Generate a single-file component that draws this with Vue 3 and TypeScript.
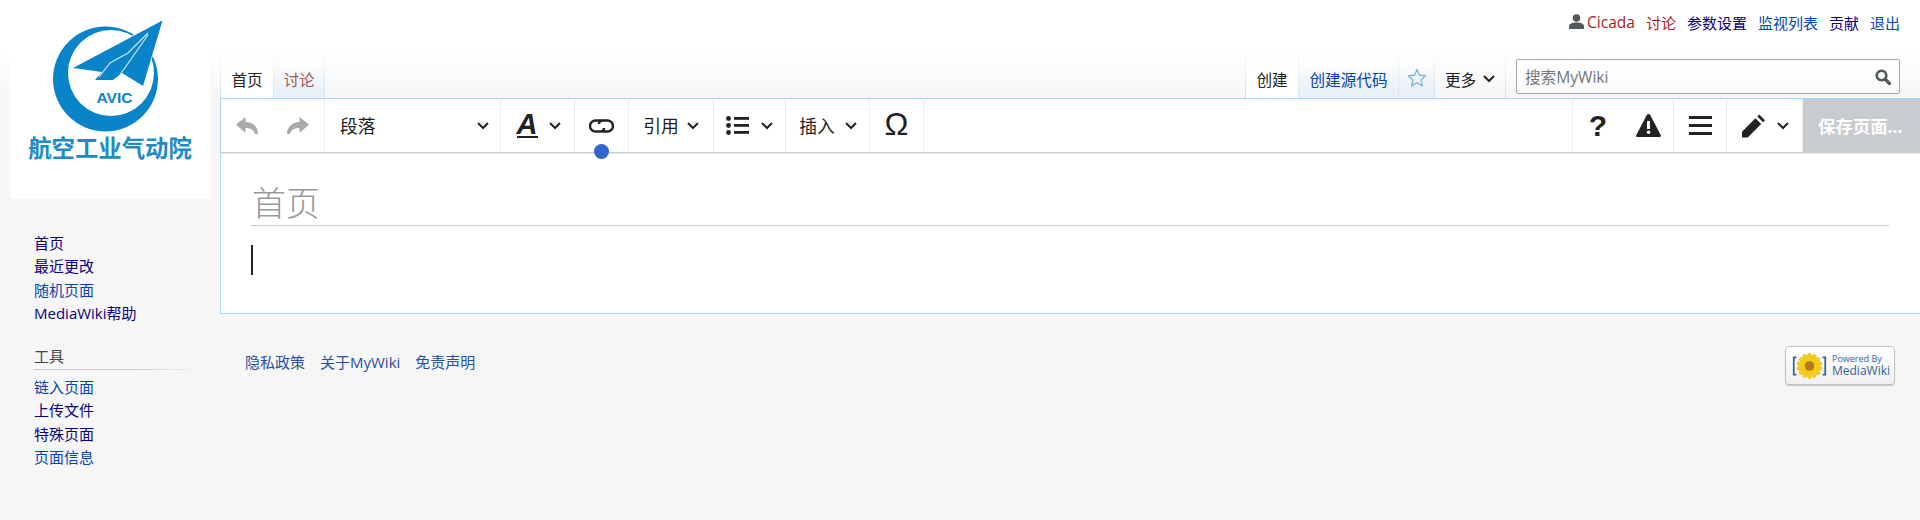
<script setup lang="ts">
interface NavLink {
  text: string
  visited?: boolean
}

const mainLinks: NavLink[] = [
  { text: '首页', visited: true },
  { text: '最近更改', visited: true },
  { text: '随机页面' },
  { text: 'MediaWiki帮助', visited: true },
]

const toolLinks: NavLink[] = [
  { text: '链入页面' },
  { text: '上传文件', visited: true },
  { text: '特殊页面', visited: true },
  { text: '页面信息' },
]

const petals = Array.from({ length: 14 }, (_, i) => i * (360 / 14))
</script>

<template>
  <div class="page">
    <aside class="sidebar">
      <div class="logo">
        <svg viewBox="10 0 200 199" width="200" height="199">
          <path
            fill="#0a84c8"
            fill-rule="evenodd"
            d="M53 79a52.500 52.500 0 1 0 105 0a52.500 52.500 0 1 0-105 0zM68 73a43 43 0 1 1 86 0a43 43 0 1 1-86 0z"
          />
          <path
            fill="#0a84c8"
            stroke="#fff"
            stroke-width="1.5"
            paint-order="stroke"
            d="M162.500 20.500L73 68l29 4-7 8h18l9-7 21 13z"
          />
          <path fill="none" stroke="#cfe6f3" stroke-width="1.2" d="M148 33l-20 20-18 10-11 14M148 35l-31 44" />
          <text x="114.500" y="103" class="logo-avic">AVIC</text>
          <text x="110" y="157" class="logo-name">航空工业气动院</text>
        </svg>
      </div>
      <nav class="nav">
        <a v-for="l in mainLinks" :key="l.text" :class="{ visited: l.visited }">{{ l.text }}</a>
        <h3 class="nav-title">工具</h3>
        <a v-for="l in toolLinks" :key="l.text" :class="{ visited: l.visited }">{{ l.text }}</a>
      </nav>
    </aside>

    <main class="main">
      <div class="personal">
        <svg class="user-icon" viewBox="0 0 15 15" width="15" height="15">
          <circle cx="7.500" cy="4" r="3.800" fill="#54595d" />
          <path d="M0 15v-2.500C0 9.500 3 8.500 7.500 8.500S15 9.500 15 12.500V15z" fill="#54595d" />
        </svg>
        <a class="user-name">Cicada</a>
        <a class="red">讨论</a>
        <a class="visited">参数设置</a>
        <a>监视列表</a>
        <a class="visited">贡献</a>
        <a>退出</a>
      </div>

      <div class="head">
        <div class="tabs">
          <span class="tab selected tab-main">首页</span>
          <span class="tab tab-talk">讨论</span>
        </div>
        <div class="head-right">
          <div class="tabs">
            <span class="tab selected tab-create">创建</span>
            <span class="tab tab-source">创建源代码</span>
            <span class="tab tab-star">
              <svg viewBox="0 0 20 19" width="20" height="19">
                <path
                  d="M10 1.500l2.500 5.700 6.100.6-4.600 4.100 1.400 6-5.400-3.200-5.400 3.200 1.400-6L1.400 7.800l6.100-.6z"
                  fill="none"
                  stroke="#7fb8d8"
                  stroke-width="1.400"
                  stroke-linejoin="round"
                />
              </svg>
            </span>
            <span class="tab tab-more">
              更多
              <svg class="chev" viewBox="0 0 12 8" width="12" height="8">
                <polyline points="1,1 6,6 11,1" />
              </svg>
            </span>
          </div>
          <div class="search">
            <span class="search-text">搜索MyWiki</span>
            <svg viewBox="0 0 16 16" width="16" height="16">
              <circle cx="6.500" cy="6.500" r="4.800" fill="none" stroke="#54595d" stroke-width="2.600" />
              <path d="M10 10L14.500 14.500" stroke="#54595d" stroke-width="3.200" stroke-linecap="round" />
            </svg>
          </div>
        </div>
      </div>

      <div class="content">
        <div class="toolbar">
          <div class="tool-group">
            <div class="tool tool-history">
              <svg viewBox="0 0 22 17" width="22" height="17">
                <path fill="#aaa" d="M0 7.500L9.500 0v5C17 5 22 10 22 17h-3c-1-4-4.500-6-9.500-6v5z" />
              </svg>
            </div>
            <div class="tool tool-history">
              <svg viewBox="0 0 22 17" width="22" height="17">
                <path fill="#aaa" d="M22 7.500L12.500 0v5C5 5 0 10 0 17h3c1-4 4.500-6 9.500-6v5z" />
              </svg>
            </div>
          </div>
          <div class="tool-group tool tool-format">
            <span class="tool-label">段落</span>
            <svg class="chev" viewBox="0 0 12 8" width="12" height="8"><polyline points="1,1 6,6 11,1" /></svg>
          </div>
          <div class="tool-group tool tool-style">
            <span class="glyph-a">A</span>
            <svg class="chev" viewBox="0 0 12 8" width="12" height="8"><polyline points="1,1 6,6 11,1" /></svg>
          </div>
          <div class="tool-group tool tool-link">
            <svg viewBox="0 0 25 14" width="25" height="14">
              <path
                fill="none"
                stroke="#222"
                stroke-width="2.400"
                d="M13 1.500H6.500a5.500 5.500 0 0 0 0 11H11c2.500 0 4-1.500 4-3.500M12 12.500h6.500a5.500 5.500 0 0 0 0-11H14c-2.500 0-4 1.500-4 3.500"
              />
            </svg>
            <span class="link-dot"></span>
          </div>
          <div class="tool-group tool tool-cite">
            <span class="tool-label">引用</span>
            <svg class="chev" viewBox="0 0 12 8" width="12" height="8"><polyline points="1,1 6,6 11,1" /></svg>
          </div>
          <div class="tool-group tool tool-list">
            <svg viewBox="0 0 23 19" width="23" height="19" fill="#222">
              <circle cx="2.500" cy="2.500" r="2.400" />
              <circle cx="2.500" cy="9.500" r="2.400" />
              <circle cx="2.500" cy="16.500" r="2.400" />
              <rect x="8" y="1" width="15" height="2.800" />
              <rect x="8" y="8" width="15" height="2.800" />
              <rect x="8" y="15" width="15" height="2.800" />
            </svg>
            <svg class="chev" viewBox="0 0 12 8" width="12" height="8"><polyline points="1,1 6,6 11,1" /></svg>
          </div>
          <div class="tool-group tool tool-insert">
            <span class="tool-label">插入</span>
            <svg class="chev" viewBox="0 0 12 8" width="12" height="8"><polyline points="1,1 6,6 11,1" /></svg>
          </div>
          <div class="tool-group tool tool-omega">
            <span class="glyph-omega">Ω</span>
          </div>

          <div class="toolbar-right">
            <div class="tool-group tool-start">
              <div class="tool tool-help"><span class="glyph-help">?</span></div>
              <div class="tool tool-notice">
                <svg viewBox="0 0 25 23" width="25" height="23">
                  <path fill="#222" d="M12.500 0c.8 0 1.300.4 1.700 1l10.500 20c.6 1.100-.1 2-1.300 2H1.600C.4 23-.3 22.100.3 21L10.800 1c.4-.6.900-1 1.700-1z" />
                  <rect x="11" y="7" width="3" height="8" fill="#fff" />
                  <circle cx="12.500" cy="18.300" r="1.800" fill="#fff" />
                </svg>
              </div>
            </div>
            <div class="tool-group tool tool-menu">
              <svg viewBox="0 0 23 19" width="23" height="19" fill="#222">
                <rect width="23" height="3" />
                <rect y="8" width="23" height="3" />
                <rect y="16" width="23" height="3" />
              </svg>
            </div>
            <div class="tool-group tool tool-edit">
              <svg viewBox="0 0 24 24" width="23" height="24" fill="#222">
                <path d="M0 24v-6L14 4l6 6L6 24z" />
                <path d="M16 2l2-2 6 6-2 2z" />
              </svg>
              <svg class="chev" viewBox="0 0 12 8" width="12" height="8"><polyline points="1,1 6,6 11,1" /></svg>
            </div>
            <div class="save">保存页面...</div>
          </div>
        </div>

        <div class="editor">
          <h1 class="title">首页</h1>
          <div class="cursor"></div>
        </div>
      </div>

      <footer class="footer">
        <div class="footer-links">
          <a>隐私政策</a>
          <a>关于MyWiki</a>
          <a>免责声明</a>
        </div>
        <div class="powered">
          <svg viewBox="0 0 40 30" width="40" height="30">
            <path d="M5 5H2v20h3M35 5h3v20h-3" fill="none" stroke="#33659a" stroke-width="2" />
            <ellipse
              v-for="r in petals"
              :key="r"
              cx="20"
              cy="5.500"
              rx="3"
              ry="5.500"
              fill="#f2cb1d"
              :transform="`rotate(${r} 20 15)`"
            />
            <circle cx="20" cy="15" r="5.500" fill="#b5781a" />
          </svg>
          <div class="powered-text">
            <span class="powered-by">Powered By</span>
            <span class="powered-name">MediaWiki</span>
          </div>
        </div>
      </footer>
    </main>
  </div>
</template>

<style>
html,
body {
  margin: 0;
  background: #f6f6f6;
}
</style>

<style scoped>
.page {
  display: grid;
  grid-template-columns: 220px 1fr;
  min-height: 520px;
  overflow: hidden;
  background: #f6f6f6 linear-gradient(#fff 50px, #f6f6f6 98px) no-repeat;
  background-size: 100% 98px;
  font-family: "Open Sans", "Noto Sans CJK SC", sans-serif;
  color: #222;
}

a {
  color: #0645ad;
  text-decoration: none;
}

a.visited {
  color: #0b0080;
}

.sidebar {
  display: flex;
  flex-direction: column;
}

.logo {
  margin-left: 10px;
  width: 200px;
  height: 199px;
  background: #fff;
}

.logo svg {
  display: block;
}

.logo-avic {
  font: bold 15.500px "Liberation Sans", sans-serif;
  fill: #0a84c8;
  text-anchor: middle;
}

.logo-name {
  font: bold 23.400px "Noto Sans CJK SC", sans-serif;
  fill: #1e8ac6;
  text-anchor: middle;
}

.nav {
  display: flex;
  flex-direction: column;
  align-items: flex-start;
  padding: 33px 0 0 34px;
  font-size: 15px;
  line-height: 23.400px;
}

.nav-title {
  width: 166px;
  margin: 19px 0 6px;
  padding-bottom: 2px;
  font-size: 15px;
  font-weight: 400;
  line-height: 23.400px;
  color: #444;
  background: linear-gradient(to right, #c8ccd1, #c8ccd1 60%, rgba(200, 204, 209, 0)) no-repeat bottom / 100% 1px;
}

.main {
  display: flex;
  flex-direction: column;
  min-width: 0;
}

.personal {
  display: flex;
  align-items: center;
  justify-content: flex-end;
  gap: 11px;
  height: 44px;
  margin-bottom: 6px;
  padding-right: 20px;
  font-size: 15px;
}

.user-icon {
  margin-right: -8px;
  margin-bottom: 2px;
}

.user-name,
.red {
  color: #a81c1c;
}

.user-name {
  font-size: 15.500px;
}

.head {
  display: flex;
  justify-content: space-between;
  height: 48px;
}

.head-right {
  display: flex;
  gap: 10px;
  padding-right: 20px;
}

.tabs {
  display: flex;
  border-left: 1px solid;
  border-image: linear-gradient(rgba(207, 227, 241, 0), #cfe3f1) 1;
}

.tab {
  display: flex;
  align-items: center;
  justify-content: center;
  box-sizing: border-box;
  height: 48px;
  padding: 12px 0 2px;
  border-right: 1px solid;
  border-image: linear-gradient(rgba(207, 227, 241, 0), #cfe3f1) 1;
  font-size: 15.600px;
  color: #0645ad;
  background: linear-gradient(rgba(255, 255, 255, 0) 30%, #e6f0f8);
}

.tab.selected {
  color: #222;
  background: linear-gradient(rgba(255, 255, 255, 0), #fff 50%);
}

.tab-main {
  width: 53px;
}

.tab-talk {
  width: 51px;
  color: #a55858;
}

.tab-create {
  width: 53px;
}

.tab-source {
  width: 100px;
}

.tab-star {
  width: 36px;
  padding: 0 0 8px;
  align-items: flex-end;
}

.tab-star svg {
  margin-bottom: 3px;
}

.tab-more {
  width: 71px;
  gap: 7px;
  color: #222;
  background: none;
}

.chev {
  flex-shrink: 0;
  fill: none;
  stroke: #222;
  stroke-width: 2;
}

.search {
  display: flex;
  align-items: center;
  justify-content: space-between;
  box-sizing: border-box;
  width: 384px;
  height: 35px;
  margin-top: 9px;
  padding: 0 8px;
  border: 1px solid #a2a9b1;
  border-radius: 2px;
  background: rgba(255, 255, 255, 0.5);
}

.search-text {
  font-size: 15.600px;
  color: #72777d;
}

.content {
  display: flex;
  flex-direction: column;
  height: 216px;
  box-sizing: border-box;
  border: 1px solid #a7d7f9;
  border-right: 0;
  background: #fff;
}

.toolbar {
  display: flex;
  flex-shrink: 0;
  box-sizing: border-box;
  height: 54px;
  border-bottom: 1px solid #c8ccd1;
  box-shadow: 0 1px 1px rgba(0, 0, 0, 0.08);
}

.toolbar-right {
  display: flex;
  margin-left: auto;
}

.tool-group {
  display: flex;
  box-sizing: border-box;
  border-right: 1px solid #eaecf0;
}

.tool {
  position: relative;
  display: flex;
  align-items: center;
  justify-content: center;
  gap: 10px;
  box-sizing: border-box;
}

.tool-label {
  margin-top: -2px;
  font-size: 17.800px;
  color: #222;
}

.tool-history {
  width: 51.500px;
}

.tool-format {
  width: 176px;
  justify-content: space-between;
  padding: 0 11px 0 15px;
}

.tool-style {
  width: 74px;
  gap: 11px;
  padding-left: 3px;
}

.tool-link {
  width: 54px;
}

.link-dot {
  position: absolute;
  left: 19px;
  bottom: -7px;
  width: 15px;
  height: 15px;
  border-radius: 50%;
  background: #36c;
}

.tool-cite {
  width: 85px;
  gap: 8px;
}

.tool-list {
  width: 72px;
  gap: 12px;
}

.tool-insert {
  width: 84px;
  gap: 10px;
  padding-left: 1px;
}

.tool-omega {
  width: 54px;
}

.glyph-a {
  font-family: "Liberation Sans", sans-serif;
  font-size: 29px;
  font-style: italic;
  font-weight: 700;
  line-height: 21px;
  border-bottom: 2.500px solid #222;
  padding: 0 1px 1px 0;
}

.glyph-omega {
  margin-top: -4px;
  font-family: "Liberation Sans", sans-serif;
  font-size: 32px;
  line-height: 1;
  color: #222;
}

.glyph-help {
  font-family: "Liberation Sans", sans-serif;
  font-size: 30px;
  font-weight: 700;
  line-height: 1;
}

.tool-start {
  width: 102px;
  border-left: 1px solid #eaecf0;
}

.tool-help {
  width: 50px;
}

.tool-notice {
  width: 50px;
}

.tool-menu {
  width: 53px;
}

.tool-edit {
  width: 76px;
  gap: 12px;
  padding-left: 2px;
}

.save {
  display: flex;
  align-items: center;
  box-sizing: border-box;
  width: 117px;
  padding-left: 15px;
  background: #c8ccd1;
  color: #fff;
  font-size: 17.400px;
  font-weight: 700;
  white-space: nowrap;
}

.editor {
  padding: 0 31px 0 30px;
}

.title {
  margin: 0;
  height: 73px;
  box-sizing: border-box;
  padding: 27px 0 0 1px;
  border-bottom: 1px solid #c8ccd1;
  font-size: 34px;
  font-weight: 300;
  line-height: 46px;
  color: #999;
}

.cursor {
  width: 2px;
  height: 30px;
  margin-top: 19px;
  background: #222;
}

.footer {
  display: flex;
  justify-content: space-between;
  align-items: flex-start;
  padding: 32px 25px 0;
}

.footer-links {
  display: flex;
  gap: 15px;
  padding-top: 1px;
  font-size: 15px;
  line-height: 30px;
}

.footer-links a {
  color: #2a4f9e;
}

.powered {
  display: flex;
  align-items: center;
  gap: 5px;
  box-sizing: border-box;
  width: 110px;
  height: 39px;
  padding: 0 4px 0 6px;
  border: 1px solid #c0c4c8;
  border-radius: 4px;
  background: linear-gradient(#fff, #f0f0f0);
  box-shadow: 0 1px 1px rgba(0, 0, 0, 0.2);
}

.powered-text {
  display: flex;
  flex-direction: column;
  white-space: nowrap;
  color: #33659a;
  font-family: "Open Sans", "Liberation Sans", sans-serif;
}

.powered-by {
  font-size: 9px;
  line-height: 11px;
}

.powered-name {
  font-size: 12px;
  line-height: 14px;
}
</style>
